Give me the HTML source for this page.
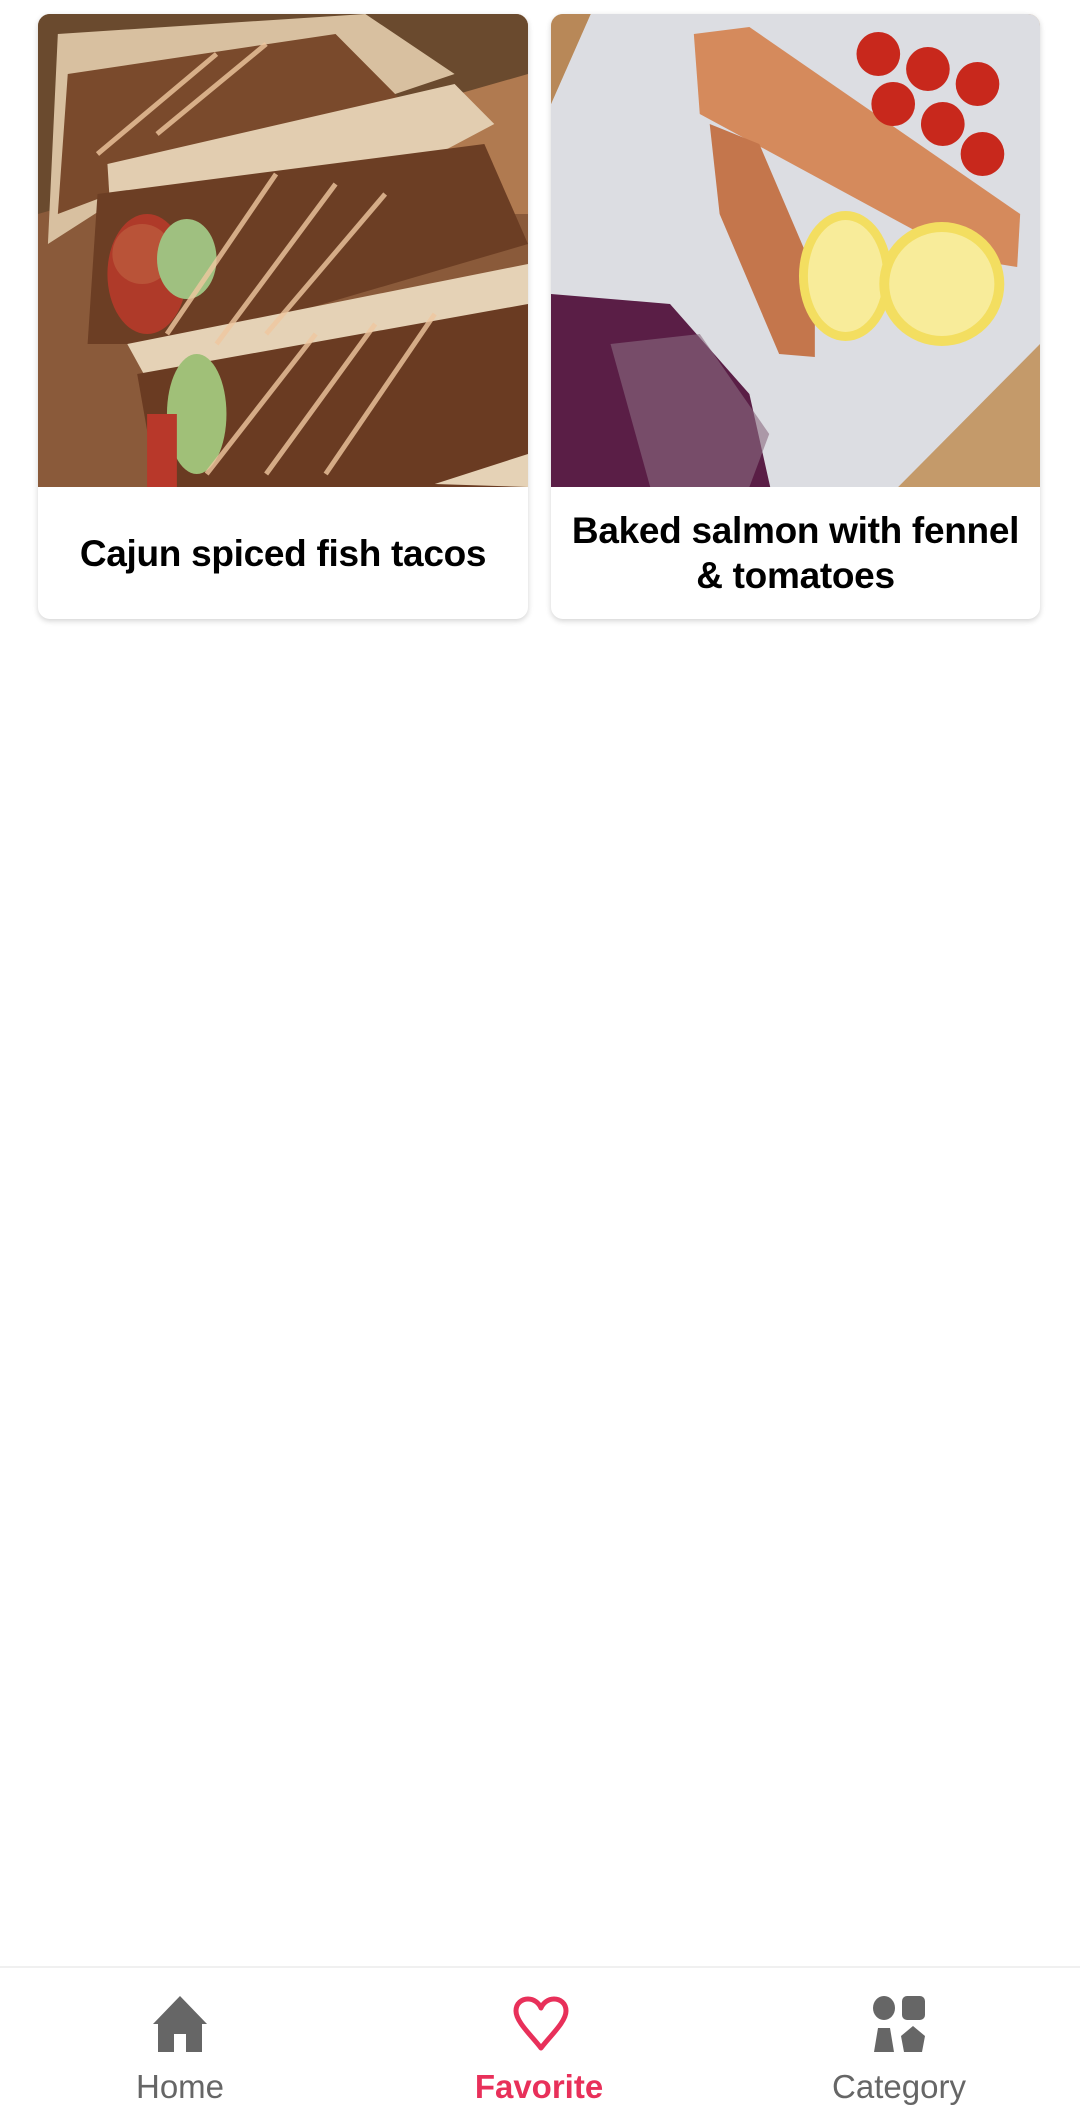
<!DOCTYPE html>
<html><head><meta charset="utf-8"><style>
*{margin:0;padding:0;box-sizing:border-box}
body{width:1080px;height:2125px;background:#fff;position:relative;overflow:hidden;font-family:"Liberation Sans",Arial,sans-serif}
.card{position:absolute;top:14px;height:605px;background:#fff;border-radius:12px;overflow:hidden;box-shadow:0 2px 6px rgba(0,0,0,.18)}
.card svg{display:block;width:100%;height:473px}
.t{position:absolute;left:0;right:0;top:473px;bottom:0;display:flex;align-items:center;justify-content:center;text-align:center;font-weight:bold;font-size:37px;line-height:45px;color:#000;letter-spacing:-0.3px}
.nav{position:absolute;left:0;top:1966px;width:1080px;height:159px;border-top:2px solid #f0f0f0;background:#fff}
.it{position:absolute;top:0;width:300px;text-align:center}
.it svg{position:absolute;top:28px;left:123px}
.it span{position:absolute;top:100px;left:0;right:0;font-size:33px;color:#666}
</style></head><body>
<div class="card" style="left:38px;width:490px">
<svg viewBox="0 0 494 473" preserveAspectRatio="none">
<rect width="494" height="473" fill="#8a5a3a"/>
<rect x="380" y="0" width="114" height="200" fill="#b07a50"/>
<polygon points="0,0 494,0 494,60 0,200" fill="#6a4a2e"/>
<polygon points="20,20 330,0 420,60 120,160 10,230" fill="#d8c0a0"/>
<polygon points="30,60 300,20 380,100 100,170 20,200" fill="#7a4a2c"/>
<polygon points="70,150 420,70 460,110 80,310" fill="#e2cdb0"/>
<polygon points="60,180 450,130 494,230 150,330 50,330" fill="#6c3e24"/>
<circle cx="105" cy="240" r="30" fill="#9ab870"/>
<ellipse cx="110" cy="260" rx="40" ry="60" fill="#c03a2a" opacity=".8"/>
<ellipse cx="150" cy="245" rx="30" ry="40" fill="#9fc080"/>
<polygon points="90,330 494,250 494,300 140,420" fill="#e5d2b6"/>
<polygon points="100,360 494,290 494,473 120,473" fill="#6a3b22"/>
<ellipse cx="160" cy="400" rx="30" ry="60" fill="#a0c078"/>
<rect x="110" y="400" width="30" height="73" fill="#b8382a"/>
<g stroke="#f0c8a0" stroke-width="5" opacity=".8">
<line x1="130" y1="320" x2="240" y2="160"/><line x1="180" y1="330" x2="300" y2="170"/><line x1="230" y1="320" x2="350" y2="180"/>
<line x1="170" y1="460" x2="280" y2="320"/><line x1="230" y1="460" x2="340" y2="310"/><line x1="290" y1="460" x2="400" y2="300"/>
<line x1="60" y1="140" x2="180" y2="40"/><line x1="120" y1="120" x2="230" y2="30"/>
</g>
<polygon points="400,470 494,440 494,473" fill="#e5d2b6"/>
</svg>
<div class="t">Cajun spiced fish tacos</div>
</div>
<div class="card" style="left:551px;width:489px">
<svg viewBox="0 0 493 473" preserveAspectRatio="none">
<rect width="493" height="473" fill="#c49a6a"/>
<polygon points="40,0 493,0 493,330 350,473 160,473 0,300 0,90" fill="#dcdde2"/>
<polygon points="144,20 200,13 473,200 470,253 420,245 150,100" fill="#d58a5c"/>
<polygon points="160,110 210,130 266,260 266,343 230,340 170,200" fill="#c4764c"/>
<g fill="#c8281c"><circle cx="330" cy="40" r="22"/><circle cx="380" cy="55" r="22"/><circle cx="430" cy="70" r="22"/><circle cx="345" cy="90" r="22"/><circle cx="395" cy="110" r="22"/><circle cx="435" cy="140" r="22"/></g>
<ellipse cx="297" cy="262" rx="47" ry="65" fill="#f3de60"/><ellipse cx="297" cy="262" rx="38" ry="56" fill="#f8ec9a"/>
<ellipse cx="394" cy="270" rx="63" ry="62" fill="#f3de60"/><ellipse cx="394" cy="270" rx="53" ry="52" fill="#f8ec9a"/>
<polygon points="0,280 120,290 200,380 221,473 0,473" fill="#5a1e46"/>
<polygon points="60,330 150,320 220,420 200,473 100,473" fill="#8a6a80" opacity=".6"/>
<polygon points="0,0 40,0 0,90" fill="#b88858"/>
</svg>
<div class="t">Baked salmon with fennel<br>&amp; tomatoes</div>
</div>
<div class="nav">
<div class="it" style="left:30px"><svg width="54" height="56" viewBox="0 0 54 56"><path d="M27 0 L54 28 L49 28 L49 56 L33 56 L33 38 L21 38 L21 56 L5 56 L5 28 L0 28 Z" fill="#666"/></svg><span>Home</span></div>
<div class="it" style="left:389px"><svg width="58" height="56" viewBox="0 0 58 56"><path d="M29 52 C20 40 4 26 4 15 C4 7 10 3 16 3 C22 3 27 7 29 12 C31 7 36 3 42 3 C48 3 54 7 54 15 C54 26 38 40 29 52 Z" fill="none" stroke="#e8305a" stroke-width="5" stroke-linejoin="round"/></svg><span style="color:#e8305a;font-weight:bold">Favorite</span></div>
<div class="it" style="left:749px"><svg width="54" height="56" viewBox="0 0 54 56"><ellipse cx="12" cy="12" rx="11" ry="12" fill="#666"/><rect x="30" y="0" width="23" height="24" rx="5" fill="#666"/><path d="M6 32 L18 32 L22 56 L2 56 Z" fill="#666"/><path d="M41 30 L53 40 L50 56 L32 56 L29 40 Z" fill="#666"/></svg><span>Category</span></div>
</div>
</body></html>
